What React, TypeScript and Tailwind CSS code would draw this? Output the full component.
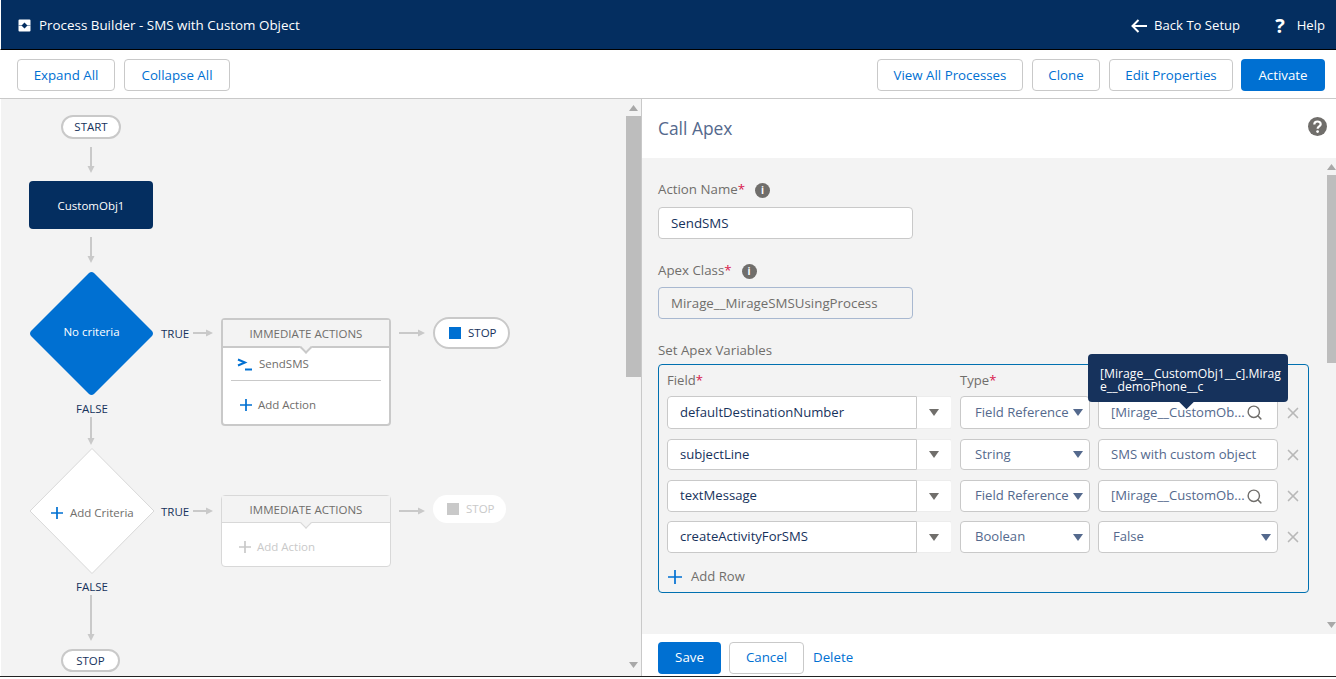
import { Search, X } from 'lucide-react';

const FONT = "font-['Segoe_UI','Open_Sans','Noto_Sans',sans-serif]";

function Hline({ x, y, w }: { x: number; y: number; w: number }) {
  return (
    <svg className="absolute" style={{ left: x, top: y }} width={w} height={8}>
      <path d={`M0 4H${w - 3}`} stroke="#c9c9c9" strokeWidth={2} />
      <path d={`M${w - 7} 0.5 L${w} 4 L${w - 7} 7.5Z`} fill="#c9c9c9" />
    </svg>
  );
}

function Vline({ x, y, h }: { x: number; y: number; h: number }) {
  return (
    <svg className="absolute" style={{ left: x, top: y }} width={8} height={h}>
      <path d={`M4 0V${h - 3}`} stroke="#c9c9c9" strokeWidth={2} />
      <path d={`M0.5 ${h - 7} L4 ${h} L7.5 ${h - 7}Z`} fill="#c9c9c9" />
    </svg>
  );
}

function Caret({ color = '#54698d' }: { color?: string }) {
  return (
    <svg width={10} height={7} viewBox="0 0 10 7">
      <path d="M0 0H10L5 7Z" fill={color} />
    </svg>
  );
}

function PlusIcon({ size, color, className }: { size: number; color: string; className?: string }) {
  return (
    <svg width={size} height={size} viewBox={`0 0 ${size} ${size}`} className={className}>
      <path d={`M${size / 2} 0V${size}M0 ${size / 2}H${size}`} stroke={color} strokeWidth={1.7} />
    </svg>
  );
}

function InfoDot({ className }: { className: string }) {
  return (
    <span className={`${className} flex h-[15px] w-[15px] items-center justify-center rounded-full bg-[#706e6b] text-[10px] font-bold text-white`}>
      i
    </span>
  );
}

function Row({
  h,
  field,
  type,
  children,
}: {
  h: string;
  field: string;
  type: string;
  children: React.ReactNode;
}) {
  return (
    <div className={`flex ${h}`}>
      <div className="flex w-[284px] rounded bg-white">
        <div className="flex flex-1 items-center rounded-l border border-[#c9c9c9] pl-[12px] text-[#16325c]">{field}</div>
        <div className="flex w-[34px] items-center justify-center border-y border-[#ececec]">
          <Caret color="#706e6b" />
        </div>
      </div>
      <div className="ml-[9px] flex w-[130px] items-center justify-between rounded border border-[#c9c9c9] bg-white pl-[14px] pr-[6px] text-[#54698d]">
        <span>{type}</span>
        <Caret />
      </div>
      <div className="ml-[8px] flex w-[180px] items-center rounded border border-[#c9c9c9] bg-white pl-[12px] pr-[8px] text-[#54698d]">
        {children}
      </div>
      <div className="flex w-[30px] items-center justify-center">
        <X size={18} strokeWidth={2.2} color="#b8b8b8" />
      </div>
    </div>
  );
}

function RefValue() {
  return (
    <>
      <span className="flex-1 whitespace-nowrap">[Mirage__CustomOb...</span>
      <Search size={17} color="#706e6b" strokeWidth={2} className="mr-[6px] shrink-0" />
    </>
  );
}

function BarButton({ label, w }: { label: string; w: string }) {
  return (
    <button className={`${w} h-[32px] rounded border border-[#c9c9c9] bg-white pt-[1px] text-[#0070d2]`}>{label}</button>
  );
}

function ScrollArrow({ up }: { up?: boolean }) {
  return (
    <svg width={9} height={6} viewBox="0 0 9 6" className="shrink-0">
      <path d={up ? 'M0 6H9L4.5 0Z' : 'M0 0H9L4.5 6Z'} fill="#a8a8a8" />
    </svg>
  );
}

function Canvas() {
  return (
    <div className="relative flex-1 overflow-hidden text-[11.5px] text-[#16325c]">
      {/* nodes are placed on the canvas, origin is x=1 y=99 */}
      <div className="absolute left-[60px] top-[16px] flex h-[24px] w-[60px] items-center justify-center rounded-full border-2 border-[#c9c9c9] bg-white">
        START
      </div>
      <Vline x={86} y={48} h={26} />
      <div className="absolute left-[28px] top-[82px] flex h-[48px] w-[124px] items-center justify-center rounded bg-[#042e60] pt-[2px] text-white">
        CustomObj1
      </div>
      <Vline x={86} y={138} h={26} />

      <svg className="absolute left-[28px] top-[172px]" width={125} height={125}>
        <path
          d="M60 2 Q62.5 0 65 2 L123 60 Q125 62.5 123 65 L65 123 Q62.5 125 60 123 L2 65 Q0 62.5 2 60Z"
          fill="#0070d2"
        />
      </svg>
      <div className="absolute left-[28px] top-[224px] w-[125px] text-center text-white">No criteria</div>
      <div className="absolute left-[160px] top-[226px]">TRUE</div>
      <Hline x={192} y={230} w={20} />
      <div className="absolute left-[75px] top-[301px]">FALSE</div>
      <Vline x={86} y={318} h={28} />

      <div className="absolute left-[220px] top-[219px] flex h-[108px] w-[170px] flex-col rounded border-2 border-[#c9c9c9] bg-white text-[#706e6b]">
        <div className="relative flex h-[28px] shrink-0 items-center justify-center border-b-2 border-[#c9c9c9] bg-[#f3f3f3] pt-[1px]">
          IMMEDIATE ACTIONS
          <div className="absolute bottom-[-6px] left-1/2 h-[9px] w-[9px] -translate-x-1/2 rotate-45 border-b-2 border-r-2 border-[#c9c9c9] bg-[#f3f3f3]" />
        </div>
        <div className="mx-[8px] flex h-[33px] shrink-0 items-center border-b border-[#c9c9c9]">
          <svg className="ml-[6px] mr-[6px]" width={16} height={14} viewBox="0 0 16 14">
            <path d="M1 2.5 L8 5.5 L1 8.5" fill="none" stroke="#0070d2" strokeWidth={2} />
            <path d="M8 12.5H15" stroke="#0070d2" strokeWidth={2} />
          </svg>
          SendSMS
        </div>
        <div className="ml-[17px] mt-[15px] flex items-center">
          <PlusIcon size={12} color="#0070d2" className="mr-[6px]" />
          Add Action
        </div>
      </div>
      <Hline x={398} y={230} w={26} />
      <div className="absolute left-[432px] top-[218px] flex h-[32px] w-[77px] items-center rounded-full border-2 border-[#c9c9c9] bg-white pl-[14px]">
        <div className="mr-[7px] h-[12px] w-[12px] bg-[#0070d2]" />
        STOP
      </div>

      <svg className="absolute left-[28px] top-[349px]" width={126} height={126}>
        <path
          d="M63 0.5 L125 63 L63 125.5 L1 63Z"
          fill="#ffffff"
          stroke="#d8d8d8"
          strokeWidth={1}
          strokeLinejoin="round"
        />
      </svg>
      <div className="absolute left-[50px] top-[405px] flex items-center text-[#706e6b]">
        <PlusIcon size={12} color="#0070d2" className="mr-[7px]" />
        Add Criteria
      </div>
      <div className="absolute left-[160px] top-[404px]">TRUE</div>
      <Hline x={192} y={408} w={20} />
      <div className="absolute left-[75px] top-[479px]">FALSE</div>
      <Vline x={86} y={496} h={46} />

      <div className="absolute left-[220px] top-[396px] flex h-[72px] w-[170px] flex-col rounded border border-[#d8d8d8] bg-white text-[#706e6b]">
        <div className="relative flex h-[27px] shrink-0 items-center justify-center border-b border-[#d8d8d8] bg-[#f3f3f3] pt-[1px]">
          IMMEDIATE ACTIONS
          <div className="absolute bottom-[-5px] left-1/2 h-[8px] w-[8px] -translate-x-1/2 rotate-45 border-b border-r border-[#d8d8d8] bg-[#f3f3f3]" />
        </div>
        <div className="ml-[17px] mt-[15px] flex items-center text-[#c9c9c9]">
          <PlusIcon size={12} color="#c9c9c9" className="mr-[6px]" />
          Add Action
        </div>
      </div>
      <Hline x={398} y={408} w={26} />
      <div className="absolute left-[432px] top-[396px] flex h-[28px] w-[73px] items-center rounded-full bg-white pl-[14px] text-[#c9c9c9]">
        <div className="mr-[7px] h-[12px] w-[12px] bg-[#c9c9c9]" />
        STOP
      </div>

      <div className="absolute left-[60px] top-[550px] flex h-[23px] w-[59px] items-center justify-center rounded-full border-2 border-[#c9c9c9] bg-white">
        STOP
      </div>
    </div>
  );
}

export default function App() {
  return (
    <div className={`${FONT} flex h-[679px] w-[1336px] flex-col overflow-hidden bg-white text-[13.3px]`}>
      <header className="flex h-[50px] shrink-0 items-center justify-between border-b border-l border-b-black border-l-white bg-[#042e60] pl-[17px] pr-[11px] pt-[2px] text-[13.4px] text-white">
        <div className="flex items-center">
          <svg width={13} height={13} viewBox="0 0 13 13" className="mr-[8px]">
            <path
              fillRule="evenodd"
              d="M1.5 0.5H11.5Q12.5 0.5 12.5 1.5V11.5Q12.5 12.5 11.5 12.5H1.5Q0.5 12.5 0.5 11.5V1.5Q0.5 0.5 1.5 0.5ZM6.5 3.5L3.5 6.5L6.5 9.5L9.5 6.5Z"
              fill="#fff"
            />
            <path d="M0.5 6.5H12.5" stroke="#042e60" strokeWidth={1} opacity={0.45} />
          </svg>
          Process Builder - SMS with Custom Object
        </div>
        <div className="flex items-center text-[13.1px]">
          <svg width={16} height={14} viewBox="0 0 16 14" className="mr-[7px]">
            <path d="M7.5 1L1.5 7L7.5 13M1.5 7H16" fill="none" stroke="#fff" strokeWidth={2} />
          </svg>
          Back To Setup
          <span className="ml-[35px] mr-[12px] text-[20px] font-bold leading-none">?</span>
          Help
        </div>
      </header>
      <div className="flex h-[49px] shrink-0 items-start justify-between border-b border-[#c9c9c9] pl-[17px] pr-[11px] pt-[9px]">
        <div className="flex gap-[9px]">
          <BarButton label="Expand All" w="w-[98px]" />
          <BarButton label="Collapse All" w="w-[106px]" />
        </div>
        <div className="flex gap-[9px]">
          <BarButton label="View All Processes" w="w-[146px]" />
          <BarButton label="Clone" w="w-[68px]" />
          <BarButton label="Edit Properties" w="w-[124px]" />
          <button className="-ml-px h-[32px] w-[84px] rounded bg-[#0070d2] pt-[1px] text-white">Activate</button>
        </div>
      </div>

      <div className="flex min-h-0 flex-1">
        <div className="flex w-[642px] shrink-0 border-r border-[#c9c9c9] bg-[#f3f3f3]">
          <div className="w-px shrink-0 bg-white" />
          <Canvas />
          <div className="flex w-[15px] flex-col items-center pb-[8px] pt-[6px]">
            <ScrollArrow up />
            <div className="mb-auto mt-[5px] h-[261px] w-full bg-[#bdbdbd]" />
            <ScrollArrow />
          </div>
        </div>

        <div className="flex min-w-0 flex-1 flex-col">
          <div className="flex h-[59px] shrink-0 items-center justify-between pl-[16px] pr-[9px]">
            <span className="text-[17.4px] text-[#54698d]">Call Apex</span>
            <svg width={19} height={19} viewBox="0 0 19 19" className="-mt-[4px]">
              <circle cx={9.5} cy={9.5} r={9.5} fill="#706e6b" />
              <path d="M6.3 7.4C6.3 3.6 12.7 3.6 12.7 7.2C12.7 9.4 9.6 9.4 9.6 11.8" fill="none" stroke="#fff" strokeWidth={2.2} />
              <circle cx={9.6} cy={14.6} r={1.4} fill="#fff" />
            </svg>
          </div>
          <div className="flex min-h-0 flex-1 bg-[#f3f3f3]">
            <div className="relative flex-1 pl-[16px] pr-[18px] pt-[23px] text-[#706e6b]">
              <div className="flex h-[18px] items-center">
                Action Name<span className="text-[#d8174c]">*</span>
                <InfoDot className="ml-[10px]" />
              </div>
              <div className="mt-[8px] flex h-[32px] w-[255px] items-center rounded border border-[#c9c9c9] bg-white pl-[12px] pt-[1px] text-[#16325c]">
                SendSMS
              </div>
              <div className="mt-[23px] flex h-[18px] items-center">
                Apex Class<span className="text-[#d8174c]">*</span>
                <InfoDot className="ml-[10px]" />
              </div>
              <div className="mt-[7px] flex h-[32px] w-[255px] items-center rounded border border-[#a8b8d0] pl-[12px] pt-[1px]">
                Mirage__MirageSMSUsingProcess
              </div>
              <div className="mt-[22px] h-[18px]">Set Apex Variables</div>
              <div className="relative mt-[5px] flex h-[229px] w-[651px] flex-col rounded border border-[#0070b0] pl-[8px] pt-[7px] text-[13.1px]">
                <div className="flex h-[17px] items-center pt-[1px]">
                  <div className="w-[293px]">
                    Field<span className="text-[#d8174c]">*</span>
                  </div>
                  <div>
                    Type<span className="text-[#d8174c]">*</span>
                  </div>
                </div>
                <div className="mt-[7px] flex flex-col gap-[10px]">
                  <Row h="h-[33px]" field="defaultDestinationNumber" type="Field Reference">
                    <RefValue />
                  </Row>
                  <Row h="h-[31px]" field="subjectLine" type="String">
                    SMS with custom object
                  </Row>
                  <Row h="h-[32px]" field="textMessage" type="Field Reference">
                    <RefValue />
                  </Row>
                  <div className="-mt-[1px]">
                    <Row h="h-[32px]" field="createActivityForSMS" type="Boolean">
                      <span className="ml-[2px] flex-1">False</span>
                      <span className="-mr-[2px]">
                        <Caret />
                      </span>
                    </Row>
                  </div>
                </div>
                <div className="ml-[1px] mt-[14px] flex items-center">
                  <PlusIcon size={14} color="#0070d2" className="mr-[9px]" />
                  Add Row
                </div>
                <div className="absolute left-[429px] top-[-11px] h-[48px] w-[200px] rounded bg-[#16325c] px-[12px] pt-[13px] text-[12.2px] leading-[13px] text-white">
                  [Mirage__CustomObj1__c].Mirag
                  <br />
                  e__demoPhone__c
                  <div className="absolute bottom-[-5px] left-[93px] h-[11px] w-[11px] rotate-45 bg-[#16325c]" />
                </div>
              </div>
            </div>
            <div className="flex w-[9px] shrink-0 flex-col items-center pb-[6px] pt-[6px]">
              <ScrollArrow up />
              <div className="mb-auto mt-[5px] h-[188px] w-full bg-[#bdbdbd]" />
              <ScrollArrow />
            </div>
          </div>
          <div className="flex h-[42px] shrink-0 items-start pl-[16px] pt-[8px]">
            <button className="h-[32px] w-[63px] rounded bg-[#0070d2] text-white">Save</button>
            <button className="ml-[8px] h-[32px] w-[75px] rounded border border-[#c9c9c9] text-[#0070d2]">Cancel</button>
            <span className="ml-[9px] pt-[6px] text-[#0070d2]">Delete</span>
          </div>
        </div>
      </div>
      <div className="h-[1px] shrink-0 bg-[#222]" />
      <div className="h-[2px] shrink-0 bg-white" />
    </div>
  );
}
